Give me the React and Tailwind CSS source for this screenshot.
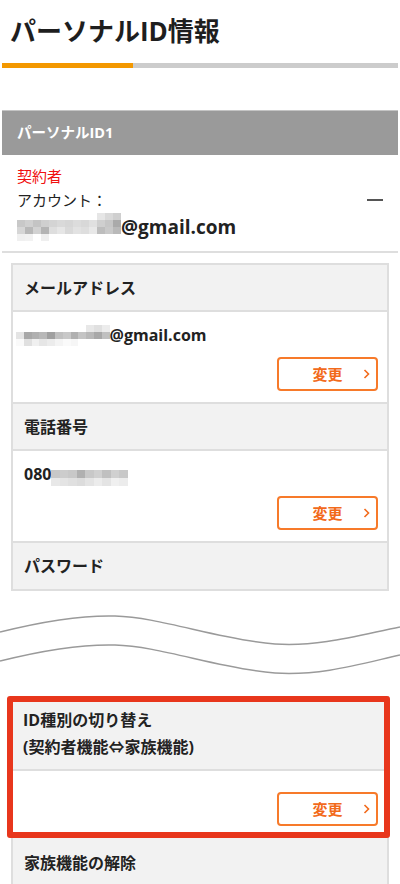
import React from 'react'

// mosaic (blurred) cells for the hidden parts of email / phone
const mailMosaic1 = [
  [null, null, null, null, null, null, null, null, null, null, '#e6e6e6', '#d9d9d9', '#cfcfcf'],
  ['#c8c8c8', '#d0d0d0', '#c4c4c4', '#cfcfcf', '#d4d4d4', '#d9d9d9', '#d6d6d6', '#dcdcdc', '#d8d8d8', '#e0e0e0', '#cfcfcf', '#c6c6c6', '#aaaaaa'],
  ['#d6d6d6', '#b8b8b8', '#d2d2d2', '#b4b4b4', '#dedede', '#e6e6e6', '#d9d9d9', '#e2e2e2', '#dedede', '#e8e8e8', '#bdbdbd', '#c9c9c9', '#b9b9b9'],
  ['#f0f0f0', '#f2f2f2', null, '#efefef', null, null, null, null, null, null, null, null, null],
]

const mailMosaic2 = [
  [null, null, null, null, null, null, null, null, null, '#e8e8e8', '#e0e0e0', '#ececec'],
  ['#e4e4e4', '#a8a8a8', '#b0b0b0', '#b8b8b8', '#a0a0a0', '#c0c0c0', '#c8c8c8', '#b0b0b0', '#c4c4c4', '#b8b8b8', '#a8a8a8', '#c0c0c0'],
  ['#fafafa', '#e0e0e0', '#f0f0f0', '#e6e6e6', '#ececec', '#f4f4f4', '#fafafa', '#f6f6f6', null, null, null, null],
]

const phoneMosaic = [
  ['#c8c8c8', '#cccccc', '#c8c8c8', '#b0b0b0', '#c8c8c8', '#d0d0d0', '#c0c0c0', '#d0d0d0', '#c8c8c8'],
  ['#e8e8e8', '#e4e4e4', '#e0e0e0', '#dcdcdc', '#e4e4e4', '#ececec', '#e4e4e4', '#f0f0f0', '#ececec'],
]

const Mosaic = ({ rows, cell, h }) => (
  <div className="flex flex-col">
    {rows.map((row, i) => (
      <div key={i} className="flex">
        {row.map((c, j) => (
          <div key={j} style={{ width: cell, height: h, backgroundColor: c || 'transparent' }} />
        ))}
      </div>
    ))}
  </div>
)

const ChangeButton = () => (
  <button className="relative flex h-[34px] w-[101px] items-center justify-center rounded-[4px] border-2 border-[#f77a2a] bg-white">
    <span className="text-[15px] font-bold leading-none text-[#f26a1b]">変更</span>
    <svg
      className="absolute right-[6px] top-1/2 -translate-y-1/2"
      width="7"
      height="11"
      viewBox="0 0 7 11"
    >
      <path d="M1.5 1.5 L5.5 5.5 L1.5 9.5" fill="none" stroke="#f26a1b" strokeWidth="1.6" />
    </svg>
  </button>
)

const SectionHead = ({ children, last }) => (
  <div
    className={`flex items-center bg-[#f2f2f2] px-[11px] text-[16px] font-bold text-[#222] ${
      last ? 'h-[46px]' : 'h-[47px] border-b-2 border-[#dedede]'
    }`}
  >
    {children}
  </div>
)

const SectionBody = ({ children }) => (
  <div className="flex h-[92px] flex-col border-b-2 border-[#dedede] bg-white">
    <div className="mt-[11px] flex h-[24px] items-center pl-[11px]">{children}</div>
    <div className="mt-[10px] flex justify-end pr-[9px]">
      <ChangeButton />
    </div>
  </div>
)

export default function App() {
  return (
    <div className="w-[400px] min-h-[884px] overflow-hidden bg-white text-[#222] font-['Open_Sans','Noto_Sans_CJK_JP',sans-serif]">
      {/* Titre */}
      <div className="h-[63px] pl-[10px] pt-[13px]">
        <h1 className="text-[26px] font-bold leading-[36px] text-[#1e1e1e]">パーソナルID情報</h1>
      </div>
      <div className="mx-[2px] flex h-[5px]">
        <div className="w-[131px] bg-[#f39800]" />
        <div className="flex-1 bg-[#cccccc]" />
      </div>

      {/* Bandeau ID */}
      <div className="mx-[2px] mt-[42px] flex h-[45px] items-center border-t border-[#c4c4c4] bg-[#9a9a9a] pl-[15px] text-[14.5px] font-bold text-white">
        パーソナルID1
      </div>

      {/* Contractant */}
      <div className="mx-[2px] border-b-2 border-[#dedede] px-[15px] pb-[9px] pt-[9px]">
        <div className="text-[15px] leading-[24px] text-[#f01010]">契約者</div>
        <div className="flex h-[24px] items-center justify-between">
          <span className="text-[15px] text-[#222]">アカウント：</span>
          <div className="h-[2px] w-[16px] bg-[#555]" />
        </div>
        <div className="flex h-[30px] items-center">
          <Mosaic rows={mailMosaic1} cell={8} h={7} />
          <span className="text-[19px] font-bold leading-none">@gmail.com</span>
        </div>
      </div>

      {/* Carte infos */}
      <div className="mx-[11px] mt-[10px] border-2 border-[#dedede]">
        <SectionHead>メールアドレス</SectionHead>
        <SectionBody>
          <div className="-ml-[8px]">
            <Mosaic rows={mailMosaic2} cell={7.8} h={7} />
          </div>
          <span className="text-[16px] font-bold leading-none">@gmail.com</span>
        </SectionBody>
        <SectionHead>電話番号</SectionHead>
        <SectionBody>
          <span className="text-[16px] font-bold leading-none">080</span>
          <div className="mt-[8px]">
            <Mosaic rows={phoneMosaic} cell={8.5} h={8} />
          </div>
        </SectionBody>
        <SectionHead last>パスワード</SectionHead>
      </div>

      {/* Coupure */}
      <svg width="400" height="105" viewBox="0 0 400 105" className="block">
        <path
          d="M0 41 C40 31 80 24 115 25 C160 26 220 49 275 53 C320 56 360 44 400 36"
          fill="none"
          stroke="#9a9a9a"
          strokeWidth="1.5"
        />
        <path
          d="M0 70 C40 60 80 53 115 54 C160 55 220 78 275 82 C320 85 360 73 400 64"
          fill="none"
          stroke="#9a9a9a"
          strokeWidth="1.5"
        />
      </svg>

      {/* Carte suite */}
      <div className="mx-[11px] border-x-2 border-[#dedede]">
        <div className="relative">
          <div className="border-b-2 border-[#dedede] bg-[#f2f2f2] pb-[8px] pl-[10px] pt-[11px] text-[16px] font-bold leading-[27px]">
            <div>ID種別の切り替え</div>
            <div>(契約者機能⇔家族機能)</div>
          </div>
          <div className="flex justify-end bg-white pb-[7px] pr-[9px] pt-[21px]">
            <ChangeButton />
          </div>
          <div className="pointer-events-none absolute -bottom-[5px] -left-[6px] -right-[3px] top-0 rounded-[3px] border-[6px] border-[#e8361c]" />
        </div>
        <div className="h-[60px] bg-[#f2f2f2] pl-[11px] pt-[18px] text-[16px] font-bold leading-[24px]">
          家族機能の解除
        </div>
      </div>
    </div>
  )
}
